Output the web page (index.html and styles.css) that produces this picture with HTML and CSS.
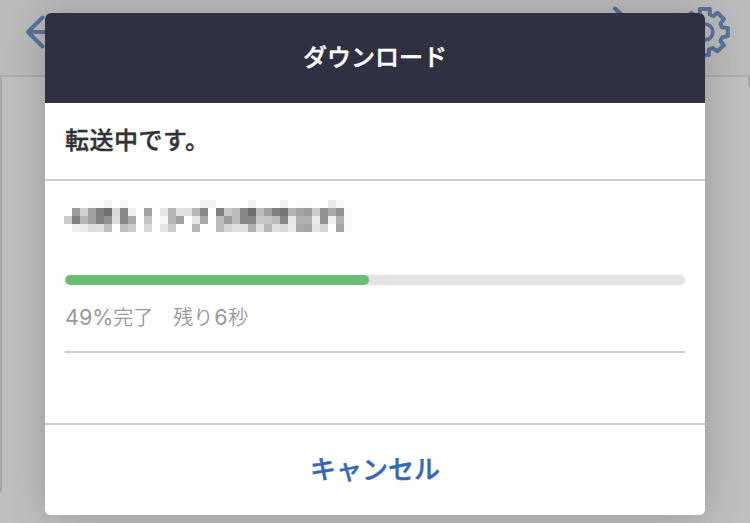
FILE: index.html
```html
<!DOCTYPE html>
<html lang="ja">
<head>
<meta charset="utf-8">
<title>ダウンロード</title>
<link rel="stylesheet" href="styles.css">
</head>
<body>
<div class="page">
  <header class="toolbar">
    <svg class="icon back" width="40" height="40" viewBox="0 0 40 40"><path d="M18.5 4.5 4 19 18.5 33.5M4 19H38"/></svg>
    <svg class="icon forward" width="40" height="50" viewBox="0 0 40 50"><path d="M5 7.5 23 25 5 43"/></svg>
    <svg class="icon gear" width="50" height="52" viewBox="681.7 6 50 52"><circle cx="705.5" cy="32" r="8"/><path d="M700.5 9H710.5V14.5L714 16L718.2 12.8L724.5 19L721.2 23.8L722.8 27.3L728.5 28V36L722.8 37.5L721.2 41L724.5 45.5L718 51.2L713.2 48L709.5 49.8V55H701.5L700 49.8L696.5 48L692 51.2L686 45.5L689 41L688 37.5L682.5 36V28L688 27.3L689 23.8L686 19L692 13L697 16L700.5 14.5Z"/></svg>
  </header>
  <main class="canvas"></main>
</div>
<section class="dialog" role="dialog">
  <h1 class="title">ダウンロード</h1>
  <p class="status">転送中です。</p>
  <div class="content">
    <div class="item">
      <svg class="filename" width="288" height="32" viewBox="0 0 36 4" shape-rendering="crispEdges"></svg>
      <div class="track"><div class="fill" style="width:49%"></div></div>
      <p class="detail"><span>49%</span>完了　残り<span>6</span>秒</p>
    </div>
  </div>
  <button class="cancel">キャンセル</button>
</section>
<script src="script.js"></script>
</body>
</html>
```
FILE: styles.css
```css
* { box-sizing: border-box; margin: 0; }
body {
  width: 750px;
  height: 523px;
  overflow: hidden;
  position: relative;
  background: #bfbfbf;
  font-family: "Noto Sans CJK JP", sans-serif;
}
.page { height: 523px; }
.toolbar {
  height: 77px;
  background: #bababa;
  border-bottom: 2px solid #adadad;
  display: flex;
  padding: 0 19px 0 24px;
}
.icon { fill: none; stroke: #56749f; stroke-width: 4; stroke-linecap: round; stroke-linejoin: round; flex: none; }
.back { margin-top: 13px; }
.forward { margin: 1px 0 0 auto; }
.gear { margin: 6px 0 0 31px; }
.gear path { stroke-width: 4; }
.gear circle { stroke-width: 3.5; }
.canvas {
  height: 415px;
  background:
    linear-gradient(#a6a6a6, #a6a6a6) left top / 2px 100% no-repeat,
    linear-gradient(#a6a6a6, #a6a6a6) right top / 2px 9px no-repeat;
}
.dialog {
  position: absolute;
  left: 45px;
  top: 13px;
  width: 660px;
  height: 502px;
  border-radius: 6px;
  overflow: hidden;
  background: #fff;
  box-shadow: 0 2px 40px rgba(0, 0, 0, .2);
  display: flex;
  flex-direction: column;
}
.title {
  height: 90px;
  background: #2f3142;
  color: #fff;
  font-size: 24px;
  font-weight: 500;
  -webkit-text-stroke: .4px #fff;
  line-height: 85px;
  text-align: center;
}
.status {
  height: 78px;
  padding-left: 20px;
  border-bottom: 2px solid #ccc;
  color: #303238;
  font-size: 24px;
  font-weight: 500;
  -webkit-text-stroke: .4px #303238;
  letter-spacing: .5px;
  line-height: 71px;
}
.content { height: 242px; padding: 19px 20px 0; }
.item { height: 153px; border-bottom: 2px solid #ccc; }
.filename { display: block; margin-left: -1px; }
.track { margin-top: 43px; height: 10px; border-radius: 5px; overflow: hidden; background: #e4e4e4; }
.fill { height: 10px; border-radius: 5px; background: #6abe76; }
.detail { margin-top: 16px; color: #999; font-size: 20px; font-weight: 350; line-height: 32px; white-space: nowrap; }
.detail span { font-family: Inter, sans-serif; font-size: 21.5px; font-weight: 400; }
.detail span + span { margin: 0 .8px; }
.cancel {
  height: 92px;
  border: 0;
  border-top: 2px solid #ccc;
  padding: 0 0 5px;
  background: #fff;
  color: #3467b9;
  font: 500 26px "Noto Sans CJK JP", sans-serif;
  -webkit-text-stroke: .4px #3467b9;
}
```
FILE: script.js
```js
// Greyscale values of the masked file name, one row of 8px cells per line.
const rows = [
  "ff ff ff fc fc f4 ff f6 ff ff ff ff ff ff ff ff fd f3 f4 ff fd fd fd f2 ff fd fd f1 ff fc fc ff ff ea f8 ff",
  "ff 9b d2 a0 80 70 d8 88 f0 ff a2 ff e6 b6 e2 e0 b8 88 ff 80 c8 bb 85 6e bb a0 80 75 b4 a4 9c cc 92 aa 92 fa",
  "cc 80 b6 a0 82 92 dc 88 aa ff c4 ff f6 b6 a0 ff e6 a8 ff bb 9c bb 86 88 c8 c5 bb 85 e8 b0 b0 ec 92 f0 b0 f9",
  "ff ee ec dc e0 c0 ff c0 cc ff d8 ff e4 cc fd fd b8 fd ff bb d4 e0 e0 b0 e0 b8 e0 da ec aa a5 e4 d4 ff a5 fa"
];
const svg = document.querySelector(".filename");
rows.forEach((row, y) => row.split(" ").forEach((v, x) => {
  const cell = document.createElementNS("http://www.w3.org/2000/svg", "rect");
  cell.setAttribute("x", x);
  cell.setAttribute("y", y);
  cell.setAttribute("width", 1);
  cell.setAttribute("height", 1);
  cell.setAttribute("fill", "#" + v + v + v);
  svg.appendChild(cell);
}));
```
